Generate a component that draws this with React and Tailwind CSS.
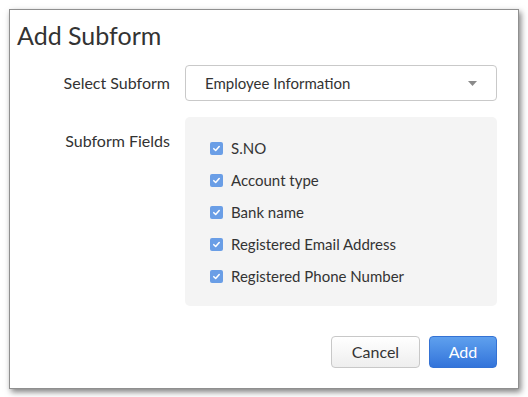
import { useState } from 'react'

const FIELDS = [
  'S.NO',
  'Account type',
  'Bank name',
  'Registered Email Address',
  'Registered Phone Number',
]

function CheckBox({ checked, onChange }) {
  return (
    <button
      type="button"
      onClick={onChange}
      className={`w-[13px] h-[13px] rounded-[2px] flex items-center justify-center shrink-0 ${
        checked ? 'bg-[#6a9ee6]' : 'bg-white border border-[#bbb]'
      }`}
    >
      {checked && (
        <svg width="9" height="9" viewBox="0 0 10 10">
          <path d="M2 5.2 L4.1 7.2 L8 2.8" fill="none" stroke="white" strokeWidth="1.7" strokeLinecap="round" strokeLinejoin="round" />
        </svg>
      )}
    </button>
  )
}

export default function App() {
  const [checked, setChecked] = useState(FIELDS.map(() => true))

  const toggle = i => setChecked(c => c.map((v, j) => (j === i ? !v : v)))

  return (
    <div className="w-[528px] h-[397px] bg-white p-[9px] font-['Lato','Liberation_Sans',sans-serif] text-[#333]">
      <div className="w-[510px] h-[380px] bg-white border border-[#8f8f8f] shadow-[2px_3px_6px_rgba(0,0,0,0.5)] flex flex-col pl-[7px] pr-[21px]">
        <h1 className="text-[25px] leading-[30px] pt-[10px] text-[#333]">Add Subform</h1>

        <div className="flex mt-[15px]">
          <div className="w-[153px] text-right text-[16px] leading-[36px]">Select Subform</div>
          <div className="ml-[15px] flex-1 h-[36px] border border-[#c9c9c9] rounded-[4px] flex items-center justify-between pl-[19px] pr-[19px] text-[15px]">
            <span>Employee Information</span>
            <svg width="9" height="5" viewBox="0 0 9 5">
              <path d="M0 0 L9 0 L4.5 5 Z" fill="#8a8a8a" />
            </svg>
          </div>
        </div>

        <div className="flex mt-[16px]">
          <div className="w-[153px] text-right text-[16px] leading-[20px] pt-[14px]">Subform Fields</div>
          <div className="ml-[15px] flex-1 h-[189px] bg-[#f4f4f4] rounded-[5px] pl-[25px] pt-[21px] flex flex-col gap-[12px]">
            {FIELDS.map((f, i) => (
              <label key={f} className="flex items-center gap-[8px] text-[15px] leading-[20px]">
                <CheckBox checked={checked[i]} onChange={() => toggle(i)} />
                <span>{f}</span>
              </label>
            ))}
          </div>
        </div>

        <div className="flex justify-end gap-[9px] mt-[30px]">
          <button className="w-[89px] h-[32px] rounded-[4px] border border-[#c8c8c8] bg-linear-to-b from-white to-[#eeeeee] text-[16px] text-[#333]">
            Cancel
          </button>
          <button className="w-[68px] h-[32px] rounded-[4px] bg-linear-to-b from-[#5fa0ee] to-[#3374da] border border-[#3472d4] text-[16px] text-white">
            Add
          </button>
        </div>
      </div>
    </div>
  )
}
